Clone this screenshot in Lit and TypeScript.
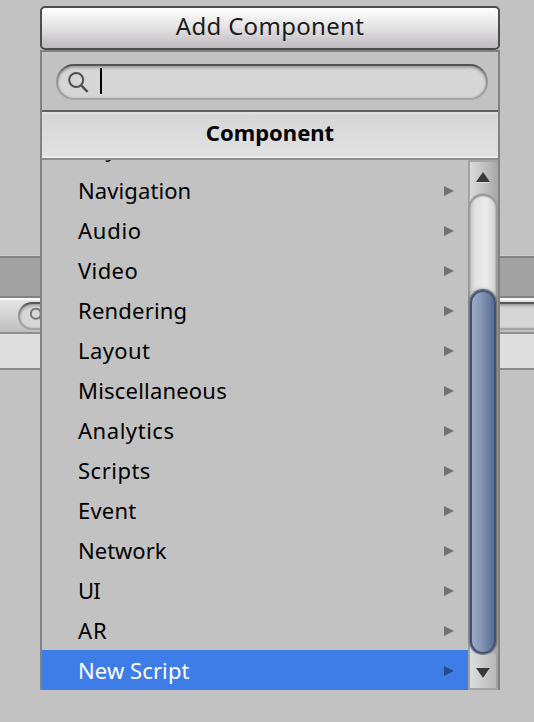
import { LitElement, html, css, svg } from "lit";
import { customElement, property } from "lit/decorators.js";

interface Entry {
  label: string;
  spacing: number;
  selected?: boolean;
}

const ENTRIES: Entry[] = [
  { label: "Physics 2D", spacing: 0.3 },
  { label: "Navigation", spacing: 0.1 },
  { label: "Audio", spacing: 0.75 },
  { label: "Video", spacing: 0.4 },
  { label: "Rendering", spacing: 0.2 },
  { label: "Layout", spacing: 0.4 },
  { label: "Miscellaneous", spacing: 0.2 },
  { label: "Analytics", spacing: 0.55 },
  { label: "Scripts", spacing: 0.5 },
  { label: "Event", spacing: 0.2 },
  { label: "Network", spacing: 0 },
  { label: "UI", spacing: -0.8 },
  { label: "AR", spacing: 1 },
  { label: "New Script", spacing: 0.1, selected: true },
];

const lens = svg`<circle cx="8.2" cy="8" r="7" fill="none" stroke="currentColor" stroke-width="2"/>
  <path d="M13.4 13.6 L19.6 19.8" fill="none" stroke="currentColor" stroke-width="2.4"/>`;

@customElement("search-field")
export class SearchField extends LitElement {
  @property({ type: Boolean }) active = false;

  static styles = css`
    :host {
      display: block;
    }
    .field {
      box-sizing: border-box;
      height: 100%;
      border-radius: 18px;
      padding: 2px;
      background: linear-gradient(#4c4c4c 0, #858585 22%, #9c9c9c 60%, #a6a6a6);
    }
    .inner {
      box-sizing: border-box;
      height: 100%;
      border-radius: 16px;
      display: flex;
      align-items: flex-start;
      background: #d6d6d6;
      box-shadow: inset 0 3px 3px -1px rgba(0, 0, 0, 0.22), inset 0 0 3px rgba(0, 0, 0, 0.16);
    }
    svg {
      display: block;
      width: 21px;
      height: 21px;
      margin: 6px 0 0 10px;
      color: #505050;
    }
    .caret {
      width: 2px;
      height: 26px;
      margin: 2px 0 0 11px;
      background: #000;
    }
    :host([compact]) svg {
      width: 15px;
      height: 15px;
      margin-top: 4px;
      color: #777;
    }
    :host([compact]) circle {
      stroke-width: 3;
    }
  `;

  render() {
    return html`<div class="field">
      <div class="inner">
        <svg viewBox="0 0 21 21">${lens}</svg>
        ${this.active ? html`<div class="caret"></div>` : null}
      </div>
    </div>`;
  }
}

@customElement("scroll-bar")
export class ScrollBar extends LitElement {
  static styles = css`
    :host {
      display: block;
      width: 30px;
    }
    .bar {
      box-sizing: border-box;
      height: 100%;
      display: flex;
      flex-direction: column;
      border: 2px solid #a3a3a3;
      border-right: 0;
      background: linear-gradient(90deg, #dadada, #c8c8c8 40%, #a6a6a6);
    }
    .step {
      flex: none;
      height: 32px;
      display: flex;
      justify-content: center;
      width: 26px;
    }
    .up {
      padding-top: 10px;
      box-sizing: border-box;
    }
    .down {
      height: 34px;
      width: 28px;
      box-sizing: border-box;
      padding-top: 14px;
      background: linear-gradient(90deg, #dedede, #b7b7b7);
      border-right: 2px solid #a3a3a3;
    }
    svg {
      display: block;
      width: 14px;
      height: 10px;
      filter: drop-shadow(0 1px 0 rgba(255, 255, 255, 0.45));
    }
    .track {
      flex: 1;
      box-sizing: border-box;
      width: 28px;
      margin-left: -1px;
      padding-top: 96px;
      border-radius: 14px;
      background: linear-gradient(90deg, #c6c6c6, #e2e2e2 25%, #ebebeb 60%, #dcdcdc 85%, #c4c4c4);
      box-shadow: inset 0 2px 2px #929292, inset 0 0 2px 1px #969696, 0 0 0 1px rgba(130, 130, 130, 0.3);
      z-index: 1;
    }
    .thumb {
      box-sizing: border-box;
      height: 100%;
      margin: 0 1px;
      border: 2px solid #3d537b;
      border-radius: 13px;
      background: linear-gradient(90deg, #9cabc4, #8497b5 40%, #60749a 90%, #566b92);
      box-shadow: 0 -1px 3px rgba(0, 0, 0, 0.45), 0 0 0 1px #8c8c8c;
    }
  `;

  render() {
    return html`<div class="bar">
      <div class="step up">
        <svg viewBox="0 0 14 10"><path d="M7 0 L14 10 H0 Z" fill="#393939" /></svg>
      </div>
      <div class="track"><div class="thumb"></div></div>
      <div class="step down">
        <svg viewBox="0 0 14 10"><path d="M0 0 H14 L7 10 Z" fill="#393939" /></svg>
      </div>
    </div>`;
  }
}

@customElement("app-root")
export class AppRoot extends LitElement {
  static styles = css`
    :host {
      display: grid;
      grid-template: 722px / 534px;
      overflow: hidden;
      background: #c2c2c2;
      font: 22px/40px "Noto Sans", "Open Sans", sans-serif;
      color: #000;
    }
    .backdrop,
    .popup {
      grid-area: 1 / 1;
    }
    .backdrop {
      padding-top: 255px;
    }
    .strip {
      height: 38px;
      border-top: 1px solid #cacaca;
      background: #828282;
      padding: 2px 0;
    }
    .strip-fill {
      height: 38px;
      background: #a2a2a2;
    }
    .toolbar {
      box-sizing: border-box;
      height: 36px;
      padding: 2px 0 2px 18px;
      border-top: 2px solid #fafafa;
      border-bottom: 2px solid #8f8f8f;
      background: linear-gradient(#e4e4e4, #bfbfbf);
    }
    .toolbar search-field {
      width: 600px;
      height: 28px;
    }
    .band {
      height: 34px;
      background: #dedede;
      border-bottom: 2px solid #8a8a8a;
    }
    .popup {
      width: 460px;
      height: 684px;
      margin: 6px 0 0 40px;
      display: flex;
      flex-direction: column;
      z-index: 1;
    }
    .add {
      box-sizing: border-box;
      height: 44px;
      flex: none;
      border: 2px solid #4d4d4d;
      border-radius: 5px;
      background: linear-gradient(#ffffff, #e3e1e3 50%, #bcbabc);
      text-align: center;
      font-size: 24px;
      line-height: 36px;
      letter-spacing: 0.3px;
      color: #1c1c1c;
    }
    .panel {
      box-sizing: border-box;
      flex: 1;
      min-height: 0;
      display: flex;
      flex-direction: column;
      border: 2px solid #828282;
      border-bottom: 0;
      background: #c2c2c2;
    }
    .search {
      flex: none;
      height: 36px;
      padding: 12px 10px 10px 14px;
    }
    .search search-field {
      height: 36px;
    }
    .header {
      box-sizing: border-box;
      flex: none;
      height: 50px;
      border-top: 2px solid #606060;
      border-bottom: 2px solid #8f8f8f;
      background: linear-gradient(#d6d6d6, #e2e2e2);
      box-shadow: inset 0 2px #e0e0e0, inset 0 -2px #ebebeb;
      text-align: center;
      font-weight: 700;
      line-height: 41px;
    }
    .body {
      flex: 1;
      min-height: 0;
      display: flex;
    }
    .list {
      flex: 1;
      display: flex;
      flex-direction: column;
      justify-content: flex-end;
      overflow: hidden;
    }
    .row {
      flex: none;
      box-sizing: border-box;
      height: 40px;
      padding: 0 14px 0 36px;
      display: flex;
      justify-content: space-between;
      align-items: center;
      color: #000;
    }
    .row:first-child {
      padding-bottom: 4px;
    }
    .row svg {
      width: 10px;
      height: 10px;
      margin-top: 1px;
      fill: #747474;
    }
    .row.selected {
      background: #3e7de7;
      color: #fff;
    }
    .row.selected svg {
      fill: #254b8b;
    }
  `;

  render() {
    return html`
      <div class="backdrop">
        <div class="strip"><div class="strip-fill"></div></div>
        <div class="toolbar"><search-field compact></search-field></div>
        <div class="band"></div>
      </div>
      <div class="popup">
        <div class="add">Add Component</div>
        <div class="panel">
          <div class="search"><search-field active></search-field></div>
          <div class="header">Component</div>
          <div class="body">
            <div class="list">
              ${ENTRIES.map(
                (e) => html`<div class="row ${e.selected ? "selected" : ""}">
                  <span style="letter-spacing:${e.spacing}px">${e.label}</span>
                  <svg viewBox="0 0 10 10"><path d="M0 0 L10 5 L0 10 Z" /></svg>
                </div>`
              )}
            </div>
            <scroll-bar></scroll-bar>
          </div>
        </div>
      </div>
    `;
  }
}
